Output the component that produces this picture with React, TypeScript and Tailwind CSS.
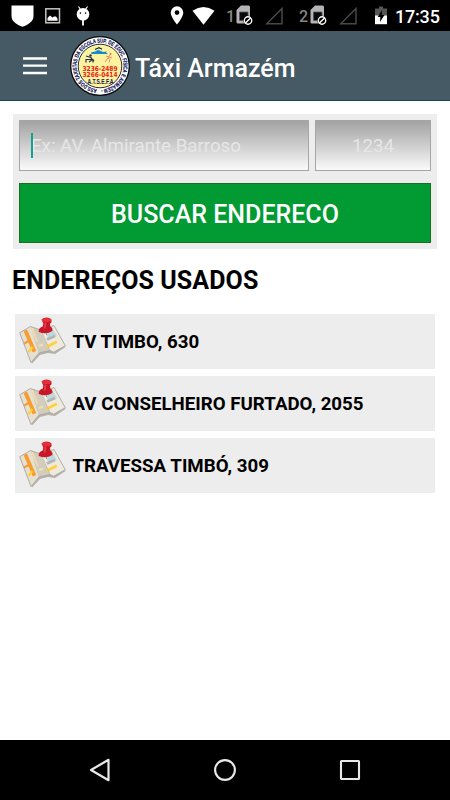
import { useState } from 'react';

interface Address {
  id: number;
  label: string;
}

const usedAddresses: Address[] = [
  { id: 1, label: 'TV TIMBO, 630' },
  { id: 2, label: 'AV CONSELHEIRO FURTADO, 2055' },
  { id: 3, label: 'TRAVESSA TIMBÓ, 309' },
];

const SimIcon = () => (
  <svg width="17" height="21" viewBox="0 0 17 21" className="block">
    <path d="M5 0.500h7.500q1.500 0 1.500 1.500v15.500q0 1-1 1H2q-1.500 0-1.500-1V5z" fill="#b4b4b8" />
    <path d="M3.500 7h8.500v8.500H3.500z" fill="#0a0a0a" stroke="#55555a" strokeWidth="0.800" />
    <circle cx="12" cy="15.500" r="4.700" fill="#000" />
    <circle cx="12" cy="15.500" r="3.700" fill="none" stroke="#fff" strokeWidth="1.400" />
    <path d="M9.400 18.100l5.200-5.200" stroke="#fff" strokeWidth="1.400" transform="translate(0 0)" />
  </svg>
);

const SignalIcon = () => (
  <svg width="18" height="18" viewBox="0 0 18 18" className="block">
    <path d="M1.800 16.700L17 1.500v15.200z" fill="none" stroke="#484848" strokeWidth="1.500" />
  </svg>
);

const StatusBar = () => (
  <div className="flex h-[31px] items-center bg-black pl-[11px] text-white">
    <svg width="23" height="22" viewBox="0 0 23 22">
      <path d="M0.500 0.500h22V11c0 5.500-5 8.500-11 10.800C5.500 19.500 0.500 16.500 0.500 11z" fill="#fff" />
    </svg>
    <svg width="16" height="16" viewBox="0 0 16 16" className="ml-[11px]">
      <rect x="0.800" y="0.800" width="13.700" height="14" fill="#000" stroke="#c4c4c4" strokeWidth="1.500" />
      <path d="M2.500 12.800V10l2.500-2.500l2.500 2l1.500-1h2l1.500 2v2.300z" fill="#fff" />
    </svg>
    <svg width="14" height="20" viewBox="0 0 14 20" className="ml-[15px]">
      <path d="M2.500 0.500l2 3M11.500 0.500l-2 3" stroke="#fff" strokeWidth="1.200" />
      <circle cx="7" cy="8.200" r="6.300" fill="#fff" />
      <circle cx="4.400" cy="7.100" r="0.800" fill="#000" />
      <circle cx="9.600" cy="7.100" r="0.800" fill="#000" />
      <path d="M7 13v6.500" stroke="#fff" strokeWidth="1.800" />
    </svg>
    <svg width="14" height="19" viewBox="0 0 14 19" className="ml-[80px]">
      <path
        d="M7 0.300a6.300 6.300 0 0 0-6.300 6.300c0 4.700 6.300 12 6.300 12s6.300-7.300 6.300-12A6.300 6.300 0 0 0 7 0.300zm0 3.900a2.400 2.400 0 1 1 0 4.800a2.400 2.400 0 0 1 0-4.800z"
        fill="#fff"
      />
    </svg>
    <svg width="23" height="18" viewBox="0 0 23 18" className="ml-2">
      <path d="M0.500 3.800Q11.500-3.600 22.500 3.800L11.500 17.700z" fill="#fff" />
    </svg>
    <span className="ml-[11px] mt-[3px] w-[10px] text-[16px] leading-none font-medium text-[#858585]">1</span>
    <SimIcon />
    <div className="ml-[12px]">
      <SignalIcon />
    </div>
    <span className="ml-[16px] mt-[3px] w-[11px] text-[16px] leading-none font-medium text-[#858585]">2</span>
    <SimIcon />
    <div className="ml-[12px]">
      <SignalIcon />
    </div>
    <svg width="12" height="19" viewBox="0 0 12 19" className="ml-[18px]">
      <path d="M4 0.500h4v2h4v8H0v-8h4z" fill="#555" />
      <path d="M0 9.500h12v8.700H0z" fill="#fff" />
      <path d="M7 4L2.700 11h2.600L5 16l4.500-7H6.800z" fill="#000" />
    </svg>
    <span className="ml-[8px] mt-[3px] text-[18px] leading-none font-medium tracking-[-0.2px]">17:35</span>
  </div>
);

const Logo = () => (
  <svg width="60" height="60" viewBox="0 0 60 60" className="block">
    <defs>
      <path id="ring" d="M30 53.400A23.400 23.400 0 0 1 30 6.600A23.400 23.400 0 0 1 30 53.400" />
    </defs>
    <circle cx="30" cy="30" r="29.300" fill="#fff" stroke="#080808" strokeWidth="1.300" />
    <circle cx="30" cy="30" r="21.800" fill="#fbf3a0" stroke="#17171d" strokeWidth="0.900" />
    <text
      fontSize="5.800"
      fontWeight="700"
      fill="#080852"
      stroke="#080852"
      strokeWidth="0.150"
      className="font-['Liberation_Sans_Narrow','Liberation_Sans',sans-serif]"
    >
      <textPath href="#ring" startOffset="3" textLength="142" lengthAdjust="spacingAndGlyphs">
        ASS.DOS TAXISTAS DA ESCOLA SUP. DE EDUC. FÍSICA E ARMAZÉM -
      </textPath>
    </text>
    <path d="M21 16.500l4-1l3-1.500l3 1l2 1l4-0.500l-1 1l2 1.500H21.500z" fill="#1688cc" />
    <path d="M25 13.500l4-1.800l3 1.500" stroke="#102a50" strokeWidth="1.200" fill="none" />
    <circle cx="20.500" cy="19.500" r="1.200" fill="#29304f" />
    <path d="M16 20l5 1.500l1 2.500l-3 2M21 22l3 3M16 26.500v-3h7v3" stroke="#29304f" strokeWidth="1.200" fill="none" />
    <circle cx="40.500" cy="18" r="1" fill="#e3705c" />
    <path d="M40 19l-2 3l2 1.500l-1 3M38 22l-3 4M36 20l3 1l3 1" stroke="#ed8a70" strokeWidth="1" fill="none" />
    <text
      x="12.500"
      y="34.500"
      textLength="35"
      lengthAdjust="spacingAndGlyphs"
      fontSize="6.800"
      fontWeight="700"
      fill="#ed2010"
      className="font-['DejaVu_Sans',sans-serif]"
    >
      3236-2489
    </text>
    <text
      x="12.500"
      y="41"
      textLength="35"
      lengthAdjust="spacingAndGlyphs"
      fontSize="6.800"
      fontWeight="700"
      fill="#ed2010"
      className="font-['DejaVu_Sans',sans-serif]"
    >
      3266-0414
    </text>
    <text
      x="17.500"
      y="47.800"
      textLength="26"
      lengthAdjust="spacingAndGlyphs"
      fontSize="7"
      fontWeight="700"
      fill="#15154a"
      className="font-['Liberation_Sans',sans-serif]"
    >
      A.T.S.E.F.A
    </text>
  </svg>
);

const MapIcon = () => (
  <svg width="48" height="48" viewBox="0 0 48 48" className="block shrink-0">
    <path d="M1 17.500l12 29l8-8.500l8-2l7 1l10.500-7l-1-2z" fill="#b5b2ab" />
    <path d="M0.700 15.700L11.500 9.500L20 36l-8 9.500z" fill="#e6e0d2" />
    <path d="M11.500 9.500L22 13l9 20.500l-11 2.500z" fill="#d3cdbf" />
    <path d="M22 13l13-4.500l11.300 20.200l-11.600 6.500L31 33.500z" fill="#eeeade" />
    <path d="M6.300 13.200l9.200 21.500" stroke="#f89c30" strokeWidth="3.800" />
    <path d="M13 11l5.500 14" stroke="#f1dcaa" strokeWidth="1.800" />
    <path d="M5 26.500l5-2.500" stroke="#f89c30" strokeWidth="2" />
    <path d="M9.500 35l4-5" stroke="#ffd030" strokeWidth="2.600" />
    <path d="M20 29l4-1.500" stroke="#eee3ae" strokeWidth="2" />
    <path d="M27.500 30l10.300-5.200" stroke="#ffd23c" strokeWidth="2.800" />
    <path d="M27 17l7.500-4l3.500 6l-8 3z" fill="#bdd9df" />
    <path d="M28 22.500l8-3.500" stroke="#b3b6b2" strokeWidth="3" />
    <path d="M22 13l9 20.500" stroke="#bcb7aa" strokeWidth="0.700" />
    <path
      d="M0.700 15.700L11.500 9.500L22 13l13-4.500l11.300 20.200l-11.600 6.500L31 33.500L20 36l-8 9.500z"
      fill="none"
      stroke="#aaa7a0"
      strokeWidth="0.900"
    />
    <path
      d="M22.500 2.500q5-4 10 0v2.800l-1.500 1.500l0.300 2.700q3 1.500 2 4.500q-6 4-13.500 1q-0.700-4 4-5.500l0.500-3z"
      fill="#ca1728"
    />
    <ellipse cx="27.500" cy="3" rx="4.700" ry="2.100" fill="#e5303b" />
    <path d="M26.500 5.500l-0.800 6" stroke="#e93d49" strokeWidth="1.800" />
    <path d="M27 16l0.700 2" stroke="#8b8d90" />
  </svg>
);

const NavigationBar = () => (
  <div className="flex h-[60px] items-center justify-between bg-black px-[88px]">
    <svg width="24" height="26" viewBox="0 0 24 26">
      <path d="M3 13L20.500 2.800v20.400z" fill="none" stroke="#e8e8e8" strokeWidth="2.200" strokeLinejoin="round" />
    </svg>
    <svg width="24" height="24" viewBox="0 0 24 24">
      <circle cx="12" cy="12" r="9.900" fill="none" stroke="#e8e8e8" strokeWidth="2.100" />
    </svg>
    <svg width="24" height="24" viewBox="0 0 24 24">
      <rect x="3" y="3" width="18" height="18" rx="0.500" fill="none" stroke="#e8e8e8" strokeWidth="2.100" />
    </svg>
  </div>
);

const App = () => {
  const [street, setStreet] = useState('');
  const [number, setNumber] = useState('');

  return (
    <div className="flex h-screen flex-col bg-white font-['Roboto',sans-serif] text-black">
      <StatusBar />
      <header className="flex h-[70px] items-center border-b border-[#174658] bg-[#455a64] pl-[23px] text-white">
        <button className="w-6">
          <svg width="24" height="18" viewBox="0 0 24 18" className="block">
            <path d="M0 1.500h24M0 8.700h24M0 16h24" stroke="#fff" strokeWidth="2.300" />
          </svg>
        </button>
        <div className="ml-[23px]">
          <Logo />
        </div>
        <h1 className="mt-1.5 ml-[5px] text-[25px] font-medium">Táxi Armazém</h1>
      </header>

      <main className="flex-1 px-[13px] pt-[13px]">
        <form className="bg-[#ededed] p-[6px]" onSubmit={(e) => e.preventDefault()}>
          <div className="flex gap-[6px]">
            <div className="relative w-[290px]">
              <input
                type="text"
                placeholder="Ex: AV. Almirante Barroso"
                value={street}
                onChange={(e) => setStreet(e.target.value)}
                className="h-[51px] w-full border border-[#a5a5a5] bg-linear-to-b from-[#a3a3a3] to-[#fafafa] pt-[1px] pl-[11px] text-[18.7px] placeholder:text-[#e6e6e6]"
              />
              <span className="absolute top-[13px] left-[12px] h-[25px] w-[2px] bg-[#12a192]" />
            </div>
            <input
              type="text"
              placeholder="1234"
              value={number}
              onChange={(e) => setNumber(e.target.value)}
              className="h-[51px] min-w-0 flex-1 border border-[#a5a5a5] bg-linear-to-b from-[#a3a3a3] to-[#fafafa] pt-[1px] text-center text-[18.7px] placeholder:text-[#e6e6e6]"
            />
          </div>
          <button className="mt-3 h-[60px] w-full border border-[#1b701f] bg-[#029a33] pt-1 text-[25px] font-medium text-white">
            BUSCAR ENDERECO
          </button>
        </form>

        <h2 className="mt-[14px] -ml-px text-[25px] leading-9 font-bold tracking-[0.1px]">ENDEREÇOS USADOS</h2>
        <ul className="mx-[2px] mt-[15px] flex flex-col gap-[7px]">
          {usedAddresses.map((address) => (
            <li key={address.id} className="flex h-[55px] bg-[#ededed] pt-[3px] pl-[4px]">
              <MapIcon />
              <span className="ml-[5.5px] text-[18.700px] leading-[51px] font-bold">{address.label}</span>
            </li>
          ))}
        </ul>
      </main>
      <NavigationBar />
    </div>
  );
};

export default App;
